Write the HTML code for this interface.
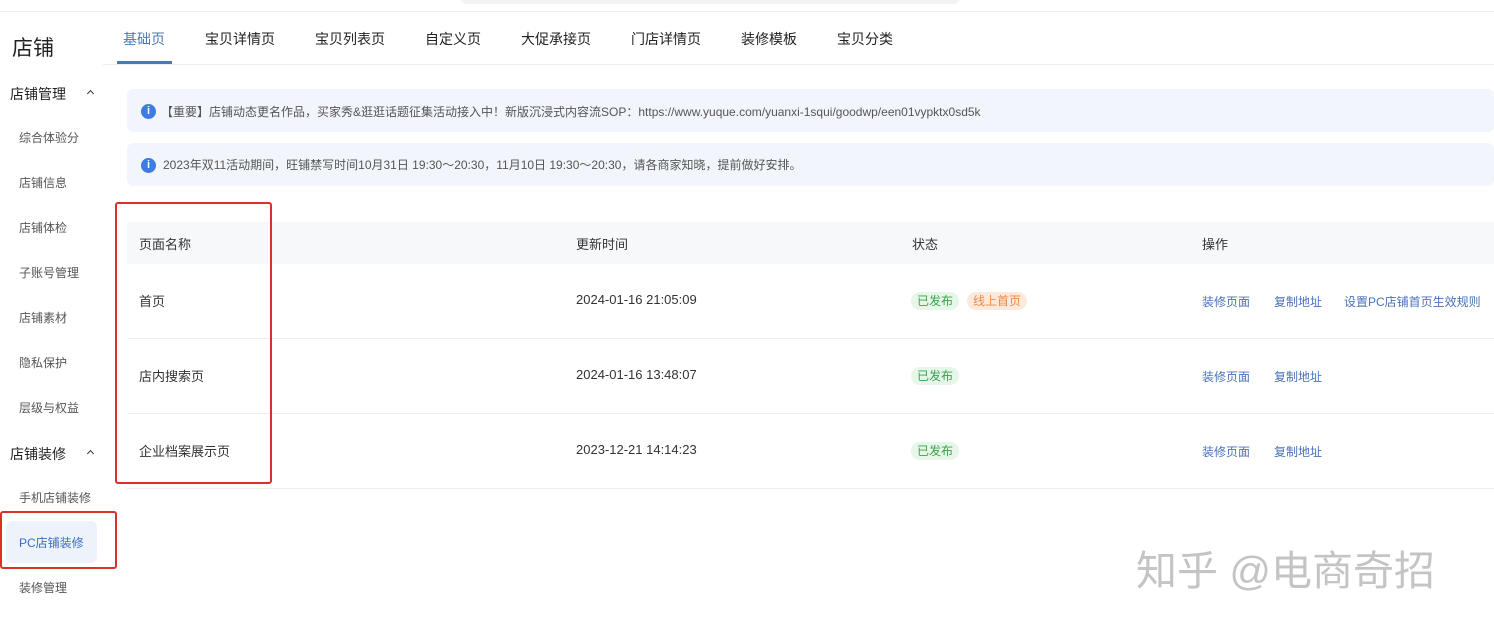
<!DOCTYPE html>
<html><head><meta charset="utf-8"><style>
*{margin:0;padding:0;box-sizing:border-box}
body{width:1494px;height:625px;background:#fff;font-family:"Liberation Sans","Noto Sans CJK SC",sans-serif;color:#333;position:relative;overflow:hidden}
.a{position:absolute;white-space:nowrap}
.nav{font-size:12px;color:#555;left:19px}
.tab{top:29px;font-size:14px;color:#222}
.info{position:absolute;left:127px;width:1367px;background:#f2f6fc;border-radius:6px}
.ic{position:absolute;left:14px;width:15px;height:15px;border-radius:50%;background:#3f7be6;color:#fff;font-size:11px;font-weight:bold;text-align:center;line-height:15px}
.tag{position:absolute;font-size:12px;border-radius:9px;padding:0 6px;height:18px;line-height:18px}
.g{background:#e6f6e8;color:#3aa14a}
.o{background:#fde9dc;color:#e88b4a}
.lk{font-size:12px;color:#4a72b8}
.row{position:absolute;left:127px;width:1367px;border-bottom:1px solid #eee}
.red{position:absolute;border:2px solid #d9302a;border-radius:3px}
.chev{position:absolute;width:5px;height:5px;border-left:1.5px solid #333;border-top:1.5px solid #333;transform:rotate(45deg)}
</style></head><body>
<div class="a" style="left:460px;top:-10px;width:500px;height:14px;background:#f3f3f3;border-radius:7px"></div>
<div class="a" style="left:0;top:11px;width:1494px;height:1px;background:#eee"></div>
<div class="a" style="left:12px;top:32px;font-size:21px;color:#222">店铺</div>
<div class="a" style="left:10px;top:84px;font-size:14px;color:#222">店铺管理</div>
<div class="chev" style="left:88px;top:91px"></div>
<div class="a nav" style="top:129px">综合体验分</div>
<div class="a nav" style="top:174px">店铺信息</div>
<div class="a nav" style="top:219px">店铺体检</div>
<div class="a nav" style="top:264px">子账号管理</div>
<div class="a nav" style="top:309px">店铺素材</div>
<div class="a nav" style="top:354px">隐私保护</div>
<div class="a nav" style="top:399px">层级与权益</div>
<div class="a" style="left:10px;top:444px;font-size:14px;color:#222">店铺装修</div>
<div class="chev" style="left:88px;top:451px"></div>
<div class="a nav" style="top:489px">手机店铺装修</div>
<div class="a" style="left:6px;top:521px;width:91px;height:42px;background:#eef3fb;border-radius:6px"></div>
<div class="a nav" style="top:534px;color:#3b6cc2">PC店铺装修</div>
<div class="a nav" style="top:579px">装修管理</div>
<div class="red" style="left:0;top:511px;width:117px;height:58px"></div>

<div class="a tab" style="left:123px;color:#4d79b0">基础页</div>
<div class="a" style="left:117px;top:61px;width:55px;height:3px;background:#4d79b0"></div>
<div class="a" style="left:103px;top:64px;width:1391px;height:1px;background:#eee"></div>
<div class="a tab" style="left:205px">宝贝详情页</div>
<div class="a tab" style="left:315px">宝贝列表页</div>
<div class="a tab" style="left:425px">自定义页</div>
<div class="a tab" style="left:521px">大促承接页</div>
<div class="a tab" style="left:631px">门店详情页</div>
<div class="a tab" style="left:741px">装修模板</div>
<div class="a tab" style="left:837px">宝贝分类</div>

<div class="info" style="top:89px;height:43px"><div class="ic" style="top:15px">i</div><div class="a" style="left:34px;top:14px;font-size:12px;color:#555">【重要】店铺动态更名作品，买家秀&amp;逛逛话题征集活动接入中！新版沉浸式内容流SOP：https://www.yuque.com/yuanxi-1squi/goodwp/een01vypktx0sd5k</div></div>
<div class="info" style="top:143px;height:43px"><div class="ic" style="top:15px">i</div><div class="a" style="left:36px;top:13px;font-size:12px;color:#555">2023年双11活动期间，旺铺禁写时间10月31日 19:30～20:30，11月10日 19:30～20:30，请各商家知晓，提前做好安排。</div></div>

<div class="row" style="top:222px;height:42px;background:#f7f8fa;border:none"></div>
<div class="a" style="left:139px;top:234px;font-size:13px">页面名称</div>
<div class="a" style="left:576px;top:234px;font-size:13px">更新时间</div>
<div class="a" style="left:912px;top:234px;font-size:13px">状态</div>
<div class="a" style="left:1202px;top:234px;font-size:13px">操作</div>

<div class="row" style="top:264px;height:75px"></div>
<div class="row" style="top:339px;height:75px"></div>
<div class="row" style="top:414px;height:75px"></div>

<div class="a" style="left:139px;top:291px;font-size:13px">首页</div>
<div class="a" style="left:576px;top:292px;font-size:13px">2024-01-16 21:05:09</div>
<div class="tag g" style="left:911px;top:292px">已发布</div>
<div class="tag o" style="left:967px;top:292px">线上首页</div>
<div class="a lk" style="left:1202px;top:293px">装修页面</div>
<div class="a lk" style="left:1274px;top:293px">复制地址</div>
<div class="a lk" style="left:1344px;top:293px">设置PC店铺首页生效规则</div>

<div class="a" style="left:139px;top:366px;font-size:13px">店内搜索页</div>
<div class="a" style="left:576px;top:367px;font-size:13px">2024-01-16 13:48:07</div>
<div class="tag g" style="left:911px;top:367px">已发布</div>
<div class="a lk" style="left:1202px;top:368px">装修页面</div>
<div class="a lk" style="left:1274px;top:368px">复制地址</div>

<div class="a" style="left:139px;top:441px;font-size:13px">企业档案展示页</div>
<div class="a" style="left:576px;top:442px;font-size:13px">2023-12-21 14:14:23</div>
<div class="tag g" style="left:911px;top:442px">已发布</div>
<div class="a lk" style="left:1202px;top:443px">装修页面</div>
<div class="a lk" style="left:1274px;top:443px">复制地址</div>

<div class="red" style="left:115px;top:202px;width:157px;height:282px"></div>
<div class="a" style="left:1136px;top:537px;font-size:41px;color:#c4c4c4;letter-spacing:0px">知乎 @电商奇招</div>
</body></html>
